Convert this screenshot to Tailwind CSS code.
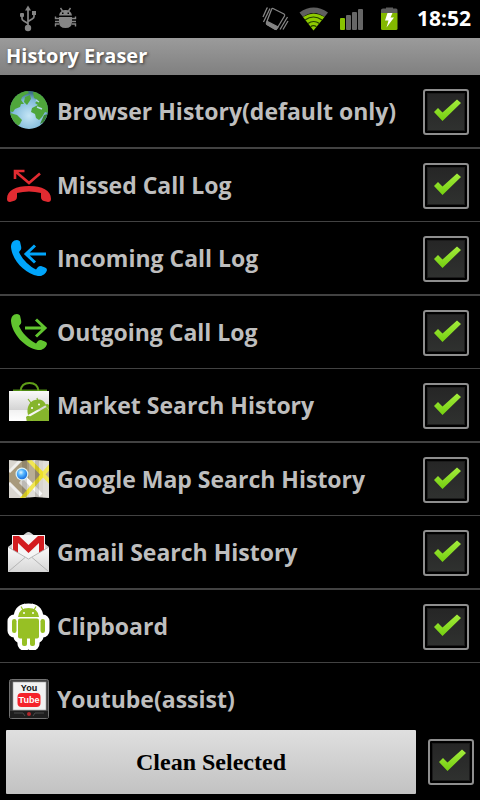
<!DOCTYPE html>
<html lang="en">
<head>
  <meta charset="UTF-8" />
  <meta name="viewport" content="width=device-width, initial-scale=1.0"/>
  <title>History Eraser</title>
  <script src="https://cdn.jsdelivr.net/npm/@tailwindcss/browser@4"></script>
</head>
<body class="bg-black font-['Open_Sans','Noto_Sans',sans-serif]">
  <!-- Shared shapes -->
  <svg class="absolute size-0" aria-hidden="true">
    <defs>
      <linearGradient id="tick" x1="0" y1="0" x2="0" y2="1"><stop offset="0" stop-color="#a4ec3c"/><stop offset="1" stop-color="#74cf10"/></linearGradient>
      <symbol id="check" viewBox="0 0 46 46"><path d="M11 23L15 19L19.500 23.500L34 10.500L38 14L19.500 32Z" fill="url(#tick)"/></symbol>
      <symbol id="handset" viewBox="0 0 48 48"><path d="M12 6C8 6 6 9 6 13C7 26 20 40 33 42C37 42.500 41 40 42 36Q42 34 40 33.500L36 32Q34 32 33 33L31 35.500C24 32 17 25 14 18L16 15.500Q16.500 14 16 12L15 7.500Q14 6 12 6Z"/></symbol>
    </defs>
  </svg>

  <div class="h-screen flex flex-col">
    <!-- Status bar -->
    <header class="h-[38px] shrink-0 flex items-center justify-between pl-[9px] pr-[9px]">
      <div class="flex">
        <svg class="size-[38px]" viewBox="0 0 38 38" fill="#858585" aria-hidden="true">
          <path d="M19 5.500L22 10.500H16Z"/><circle cx="19" cy="28" r="3.200"/><rect x="11" y="13" width="4" height="4" rx="1"/><rect x="23" y="11" width="4" height="4"/>
          <path d="M19 9V27M13 16V18.500Q13 20 14.500 20.700L19 23.500M25 14V16.500Q25 18 23.500 18.700L19 21.500" fill="none" stroke="#858585" stroke-width="1.700"/>
        </svg>
        <svg class="size-[38px]" viewBox="0 0 38 38" fill="#858585" aria-hidden="true">
          <path fill-rule="evenodd" d="M12 15.500Q13 10 18.500 10T25 15.500ZM15 12.500V14H16.500V12.500ZM20.500 12.500V14H22V12.500Z"/><path d="M12 17H25V22Q25 28 18.500 28T12 22Z"/>
          <path d="M15.500 11L13.500 8M21.500 11L23.500 8M12 18.500H8.500V16.500M12 21.500H8M12 24H8.500V26.500M25 18.500H28.500V16.500M25 21.500H29M25 24H28.500V26.500" fill="none" stroke="#858585" stroke-width="1.400"/>
        </svg>
      </div>
      <div class="flex items-center">
        <svg class="size-[38px]" viewBox="0 0 38 38" fill="none" stroke="#858585" stroke-width="1.300" aria-hidden="true">
          <path d="M16 8.500L27 14Q28 14.700 27.500 16L20 28.500Q19 30 17.500 29L10 24.500Q9 24 9.500 22.500L14.500 9.500Q15 8 16 8.500Z"/><path d="M10.500 21.500L21 27L19 29.500L10 24.500Z" fill="#858585"/>
          <path d="M10 8L6 17M13 8.500L6.500 22M30.500 17L23 29.500M31 21L26 29.500M10.500 7.500L9 10"/>
        </svg>
        <svg class="size-[38px]" viewBox="0 0 38 38" aria-hidden="true">
          <path d="M4.500 12.500Q18.500 2.500 33 12.500L29.500 17Q18.500 9 8 17Z" fill="#5f5f5f"/>
          <path d="M8 17Q18.500 10 29.500 17L18.500 30.500Z" fill="#8ecb00"/>
          <path d="M10 20Q18.500 14 27 20M13 23.500Q18.500 19.500 24.500 23.500M15.500 26.800Q18.500 24.500 21.500 26.800" fill="none" stroke="#244000" stroke-width="1.200"/>
        </svg>
        <svg class="size-[38px]" viewBox="0 0 38 38" aria-hidden="true">
          <rect x="7" y="18" width="5" height="12" rx="1" fill="#88c200"/><g fill="#666"><rect x="13" y="15" width="5" height="15" rx="1"/><rect x="19" y="12" width="5" height="18" rx="1"/><rect x="25" y="9" width="5" height="21" rx="1"/></g>
        </svg>
        <svg class="size-[38px]" viewBox="0 0 38 38" aria-hidden="true">
          <path d="M10 10Q10 8.500 12 8.500H15V7.500H22V8.500H25Q26.500 8.500 26.500 10V13H10Z" fill="#5d5d5d"/><path d="M10 13H26.500V28.500Q26.500 30 25 30H11.500Q10 30 10 28.500Z" fill="#83b800"/><path d="M16.500 13H21.500L19.500 17.500H23L15.500 27.500L17.500 20.500H14Z" fill="#fff"/>
        </svg>
        <time class="ml-2 text-[21px] font-bold text-white">18:52</time>
      </div>
    </header>

    <h1 class="h-[37px] shrink-0 px-1.5 text-xl leading-9 font-bold text-white bg-linear-to-b from-[#9b9b9b] to-[#808080] [text-shadow:1px_1px_3px_#333]">History Eraser</h1>

    <!-- Items -->
    <ul class="flex-1 min-h-0 overflow-y-auto [scrollbar-width:none] text-[23px] leading-8 font-bold text-[#bebebe]">
      <li class="box-content h-18 flex items-center pl-[5px] pr-[11px] border-b-2 border-[#424242]">
        <svg class="size-12 mr-1 shrink-0" viewBox="0 0 48 48" aria-hidden="true">
          <defs><radialGradient id="sea" cx=".5" cy=".65" r=".6"><stop offset="0" stop-color="#c4e5f5"/><stop offset=".7" stop-color="#82bbdc"/><stop offset="1" stop-color="#3d7186"/></radialGradient><clipPath id="disc"><circle cx="24" cy="23" r="19"/></clipPath></defs>
          <circle cx="24" cy="23" r="19" fill="url(#sea)"/>
          <g clip-path="url(#disc)" fill="#4fa63b"><path d="M4 24V12L14 4L22 3L24 6L20 8L17 10L16 13L19 17L16 17L15 20L10 22L8 25Z"/><path d="M20 10L25 8L26 12L22 18L19 15Z"/><path d="M28 5H35L44 14V26L40 25L37 30L34 33L31 31L30 27L26 25L27 21L33 18L30 16L33 13L29 11Z"/><path d="M5 26L12 28L17 33L15 37L13 39L5 32Z"/><path d="M39 28L43 27L39 35L35 37Z" fill="#3a8536"/></g>
          <path d="M32 20L37 22M31 13L34 15" stroke="#b5dced" stroke-width="1.500"/>
        </svg>
        <label for="browser" class="flex-1">Browser History(default only)</label>
        <span class="relative size-[46px] mt-0.5 shrink-0">
          <input type="checkbox" id="browser" checked class="peer block appearance-none size-full rounded-[3px] border-2 border-[#8e8e8e] bg-linear-to-b from-[#252525] to-[#303230] shadow-[inset_0_0_0_2px_#000,inset_0_0_0_3px_#1b1b1b]" />
          <svg class="absolute inset-0 size-full pointer-events-none invisible peer-checked:visible"><use href="#check"/></svg>
        </span>
      </li>
      <li class="box-content h-18 flex items-center pl-[5px] pr-[11px] border-b border-[#424242]">
        <svg class="size-12 mr-1 shrink-0" viewBox="0 0 48 48" aria-hidden="true">
          <path d="M2 38C2 29 11 25 24 25S46 29 46 38Q46 41 43 41L39 40Q36 39 36 36V32Q24 29 12 32V36Q12 38.500 10 39.500L5 41Q2 41 2 38Z" fill="#e22b31"/>
          <path d="M10 18V10H19.500M10.500 10.500L24 22L35 12.500" fill="none" stroke="#e22b31" stroke-width="2.600"/>
        </svg>
        <label for="missed" class="flex-1">Missed Call Log</label>
        <span class="relative size-[46px] mt-0.5 shrink-0">
          <input type="checkbox" id="missed" checked class="peer block appearance-none size-full rounded-[3px] border-2 border-[#8e8e8e] bg-linear-to-b from-[#252525] to-[#303230] shadow-[inset_0_0_0_2px_#000,inset_0_0_0_3px_#1b1b1b]" />
          <svg class="absolute inset-0 size-full pointer-events-none invisible peer-checked:visible"><use href="#check"/></svg>
        </span>
      </li>
      <li class="box-content h-18 flex items-center pl-[5px] pr-[11px] border-b-2 border-[#424242]">
        <svg class="size-12 mr-1 shrink-0" viewBox="0 0 48 48" fill="#00a5fb" aria-hidden="true">
          <use href="#handset"/><path d="M41 20H21M30 11.500L21 20L30 28.500" fill="none" stroke="#00a5fb" stroke-width="3"/>
        </svg>
        <label for="incoming" class="flex-1">Incoming Call Log</label>
        <span class="relative size-[46px] mt-0.5 shrink-0">
          <input type="checkbox" id="incoming" checked class="peer block appearance-none size-full rounded-[3px] border-2 border-[#8e8e8e] bg-linear-to-b from-[#252525] to-[#303230] shadow-[inset_0_0_0_2px_#000,inset_0_0_0_3px_#1b1b1b]" />
          <svg class="absolute inset-0 size-full pointer-events-none invisible peer-checked:visible"><use href="#check"/></svg>
        </span>
      </li>
      <li class="box-content h-18 flex items-center pl-[5px] pr-[11px] border-b border-[#424242]">
        <svg class="size-12 mr-1 shrink-0" viewBox="0 0 48 48" fill="#61c52f" aria-hidden="true">
          <use href="#handset"/><path d="M20 20H40M31 11.500L40 20L31 28.500" fill="none" stroke="#61c52f" stroke-width="3"/>
        </svg>
        <label for="outgoing" class="flex-1">Outgoing Call Log</label>
        <span class="relative size-[46px] mt-0.5 shrink-0">
          <input type="checkbox" id="outgoing" checked class="peer block appearance-none size-full rounded-[3px] border-2 border-[#8e8e8e] bg-linear-to-b from-[#252525] to-[#303230] shadow-[inset_0_0_0_2px_#000,inset_0_0_0_3px_#1b1b1b]" />
          <svg class="absolute inset-0 size-full pointer-events-none invisible peer-checked:visible"><use href="#check"/></svg>
        </span>
      </li>
      <li class="box-content h-18 flex items-center pl-[5px] pr-[11px] border-b-2 border-[#424242]">
        <svg class="size-12 mr-1 shrink-0" viewBox="0 0 48 48" aria-hidden="true">
          <defs><linearGradient id="bag" x1="0" y1="0" x2="0" y2="1"><stop offset="0" stop-color="#fafafa"/><stop offset=".62" stop-color="#d4d4d4"/><stop offset=".65" stop-color="#f2f2f2"/><stop offset="1" stop-color="#fff"/></linearGradient><clipPath id="bagclip"><rect x="4" y="10" width="40" height="30"/></clipPath></defs>
          <path d="M8 9.500H42" stroke="#4e8a12" stroke-width="2"/><path d="M15.500 10C16 5 19 2 24.500 2S33 5 33.500 10" fill="none" stroke="#5f9f18" stroke-width="2"/>
          <rect x="4" y="10" width="40" height="30" fill="url(#bag)"/>
          <g clip-path="url(#bagclip)"><path d="M23 34C21 26 25 20 30 19Q38 17 41 24Z" fill="#86b52c"/><path d="M24 36L41.500 26L46 32V42H29Z" fill="#86b52c"/><path d="M26 22L23 18M33 21L32 17" stroke="#86b52c" stroke-width="1.200"/><path d="M21 36Q24 33 26 37L28 42H22ZM40 24Q43 21 45 26V30Z" fill="#86b52c"/><circle cx="27" cy="27" r="1" fill="#fff"/><circle cx="34" cy="23.500" r="1" fill="#fff"/></g>
        </svg>
        <label for="market" class="flex-1">Market Search History</label>
        <span class="relative size-[46px] mt-0.5 shrink-0">
          <input type="checkbox" id="market" checked class="peer block appearance-none size-full rounded-[3px] border-2 border-[#8e8e8e] bg-linear-to-b from-[#252525] to-[#303230] shadow-[inset_0_0_0_2px_#000,inset_0_0_0_3px_#1b1b1b]" />
          <svg class="absolute inset-0 size-full pointer-events-none invisible peer-checked:visible"><use href="#check"/></svg>
        </span>
      </li>
      <li class="box-content h-18 flex items-center pl-[5px] pr-[11px] border-b border-[#424242]">
        <svg class="size-12 mr-1 shrink-0" viewBox="0 0 48 48" aria-hidden="true">
          <defs><clipPath id="sheet"><path d="M4 5L17 6L30 5L44 6V43L30 42L17 43L4 43Z"/></clipPath><radialGradient id="ball" cx=".4" cy=".35" r=".7"><stop offset="0" stop-color="#e4f7ff"/><stop offset=".4" stop-color="#55b7ff"/><stop offset="1" stop-color="#1268dc"/></radialGradient></defs>
          <g clip-path="url(#sheet)"><rect x="4" y="5" width="40" height="39" fill="#d9d6d0"/>
          <path d="M4 17L16 5H23L36 20L28 30L19 20L14 28L22 36L16 42L4 27ZM44 15L38 21L44 27Z" fill="#a89a7c"/><path d="M4 17L16 5M4 28L20 44" stroke="#efefed" stroke-width="3"/><path d="M18 21L36 40" stroke="#fafafa" stroke-width="4"/>
          <path d="M23 4L46 28M46 10L15 46" stroke="#eee12a" stroke-width="4"/><path d="M17 5H22V44H17ZM30 5H34V44H30Z" fill="#000" opacity=".13"/><path d="M24 5H30V44H24ZM38 5H44V44H38Z" fill="#fff" opacity=".2"/></g>
          <circle cx="17" cy="19" r="6.500" fill="#d9f0f6"/><circle cx="17" cy="19" r="5.200" fill="url(#ball)"/>
        </svg>
        <label for="maps" class="flex-1">Google Map Search History</label>
        <span class="relative size-[46px] mt-0.5 shrink-0">
          <input type="checkbox" id="maps" checked class="peer block appearance-none size-full rounded-[3px] border-2 border-[#8e8e8e] bg-linear-to-b from-[#252525] to-[#303230] shadow-[inset_0_0_0_2px_#000,inset_0_0_0_3px_#1b1b1b]" />
          <svg class="absolute inset-0 size-full pointer-events-none invisible peer-checked:visible"><use href="#check"/></svg>
        </span>
      </li>
      <li class="box-content h-18 flex items-center pl-[5px] pr-[11px] border-b-2 border-[#424242]">
        <svg class="size-12 mr-1 shrink-0" viewBox="0 0 48 48" aria-hidden="true">
          <defs><linearGradient id="env" x1="0" y1="0" x2="0" y2="1"><stop offset="0" stop-color="#fafafa"/><stop offset="1" stop-color="#d6d6d6"/></linearGradient></defs>
          <path d="M3 19L21 5Q23.500 3 26 5L44 19V44H3Z" fill="#cfcfcf"/><rect x="7" y="7" width="33" height="26" fill="#f5f5f5"/>
          <path d="M8 8H14L23.500 17L33 8H39V27H34V15L23.500 25L13 15V27H8Z" fill="#d31c20"/>
          <path d="M3 19L23.500 31L44 19V44H3Z" fill="url(#env)"/><path d="M3.500 43.500L20 29.500M43.500 43.500L27 29.500M3 19L23.500 31L44 19" fill="none" stroke="#a9a9a9" stroke-width=".8"/>
        </svg>
        <label for="gmail" class="flex-1">Gmail Search History</label>
        <span class="relative size-[46px] mt-0.5 shrink-0">
          <input type="checkbox" id="gmail" checked class="peer block appearance-none size-full rounded-[3px] border-2 border-[#8e8e8e] bg-linear-to-b from-[#252525] to-[#303230] shadow-[inset_0_0_0_2px_#000,inset_0_0_0_3px_#1b1b1b]" />
          <svg class="absolute inset-0 size-full pointer-events-none invisible peer-checked:visible"><use href="#check"/></svg>
        </span>
      </li>
      <li class="box-content h-18 flex items-center pl-[5px] pr-[11px] border-b border-[#424242]">
        <svg class="size-12 mr-1 shrink-0" viewBox="0 0 48 48" aria-hidden="true">
          <defs><g id="robot"><path d="M13 15Q14 6 23.500 6T34 15Z"/><rect x="13" y="16.500" width="21" height="20" rx="2"/><rect x="7" y="17" width="4.500" height="14" rx="2.200"/><rect x="35.500" y="17" width="4.500" height="14" rx="2.200"/><rect x="17" y="32" width="5" height="12" rx="2"/><rect x="25" y="32" width="5" height="12" rx="2"/><path d="M18 7L16 4M29 7L31 4"/></g></defs>
          <use href="#robot" fill="#fff" stroke="#fff" stroke-width="9" stroke-linejoin="round"/><use href="#robot" fill="#97c024"/>
          <path d="M18 8L16 4.500M29 8L31 4.500" stroke="#97c024" stroke-width="1.200"/><circle cx="19" cy="11" r="1" fill="#fff"/><circle cx="28" cy="11" r="1" fill="#fff"/>
        </svg>
        <label for="clipboard" class="flex-1">Clipboard</label>
        <span class="relative size-[46px] mt-0.5 shrink-0">
          <input type="checkbox" id="clipboard" checked class="peer block appearance-none size-full rounded-[3px] border-2 border-[#8e8e8e] bg-linear-to-b from-[#252525] to-[#303230] shadow-[inset_0_0_0_2px_#000,inset_0_0_0_3px_#1b1b1b]" />
          <svg class="absolute inset-0 size-full pointer-events-none invisible peer-checked:visible"><use href="#check"/></svg>
        </span>
      </li>
      <li class="box-content h-18 flex items-center pl-[5px] pr-[11px]">
        <svg class="size-12 mr-1 shrink-0" viewBox="0 0 48 48" aria-hidden="true">
          <rect x="4.500" y="4.500" width="39" height="39" rx="2" fill="#414141" stroke="#727272"/><rect x="5" y="36" width="38" height="7" fill="#1e1e1e"/>
          <rect x="8" y="7" width="33" height="28" fill="#f2f2f2" stroke="#999" stroke-width=".6"/><rect x="12.500" y="18" width="23" height="14" rx="4" fill="#f5222a"/>
          <text x="24" y="16" text-anchor="middle" font-size="9" font-weight="700" class="font-['Liberation_Sans',sans-serif]" fill="#111">You</text>
          <text x="24" y="28" text-anchor="middle" font-size="9" font-weight="700" class="font-['Liberation_Sans',sans-serif]" fill="#fff">Tube</text>
          <path d="M9 38H18L20 41M39 38H30L28 41" fill="none" stroke="#4b4b4b"/><circle cx="24" cy="39" r="2" fill="#b3262b"/>
        </svg>
        <span class="flex-1">Youtube(assist)</span>
      </li>
    </ul>

    <!-- Actions -->
    <footer class="shrink-0 flex items-center gap-3 pl-1.5 pr-1.5 pb-1.5">
      <button type="button" class="flex-1 h-16 rounded-[1px] bg-linear-to-b from-[#dfdfdf] to-[#c2c2c2] font-['Liberation_Serif',serif] text-2xl font-bold text-black">Clean Selected</button>
      <span class="relative size-[46px] shrink-0">
        <input type="checkbox" id="all" aria-label="Select all" checked class="peer block appearance-none size-full rounded-[3px] border-2 border-[#8e8e8e] bg-linear-to-b from-[#252525] to-[#303230] shadow-[inset_0_0_0_2px_#000,inset_0_0_0_3px_#1b1b1b]" />
        <svg class="absolute inset-0 size-full pointer-events-none invisible peer-checked:visible"><use href="#check"/></svg>
      </span>
    </footer>
  </div>

  <script>
  const boxes = document.querySelectorAll('ul input');
  document.getElementById('all').addEventListener('change', e => {
    boxes.forEach(box => box.checked = e.target.checked);
  });
  document.querySelector('button').addEventListener('click', () => {
    boxes.forEach(box => box.checked = false);
  });
  </script>
</body>
</html>
